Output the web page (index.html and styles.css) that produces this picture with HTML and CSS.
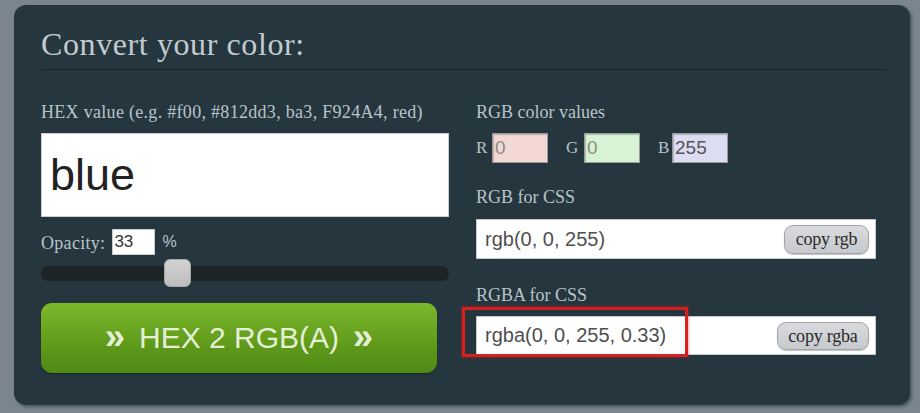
FILE: index.html
```html
<!DOCTYPE html>
<html>
<head>
<meta charset="utf-8">
<link rel="stylesheet" href="styles.css">
</head>
<body>
<div class="panel">
  <h1 class="title">Convert your color:</h1>
  <div class="columns">
    <div class="col-left">
      <div class="label label-hex">HEX value (e.g. #f00, #812dd3, ba3, F924A4, red)</div>
      <div class="hex-input">blue</div>
      <div class="opacity-row">
        <span class="label-inline">Opacity:</span>
        <span class="opacity-input">33</span>
        <span class="pct">%</span>
      </div>
      <div class="slider">
        <div class="track"></div>
        <div class="thumb" style="left: 123px"></div>
      </div>
      <div class="convert-btn"><span class="chev chev-l">»</span>HEX 2 RGB(A)<span class="chev chev-r">»</span></div>
    </div>
    <div class="col-right">
      <div class="label">RGB color values</div>
      <div class="rgb-row">
        <span class="ch">R</span><span class="chan chan-r">0</span>
        <span class="ch ch-g">G</span><span class="chan chan-g">0</span>
        <span class="ch ch-b">B</span><span class="chan chan-b">255</span>
      </div>
      <div class="label label-css">RGB for CSS</div>
      <div class="css-row">
        <span class="css-text">rgb(0, 0, 255)</span>
        <span class="copy-btn">copy rgb</span>
      </div>
      <div class="label label-rgba">RGBA for CSS</div>
      <div class="highlight-wrap">
        <div class="css-row css-row-rgba">
          <span class="css-text">rgba(0, 0, 255, 0.33)</span>
          <span class="copy-btn copy-rgba">copy rgba</span>
        </div>
        <div class="highlight"></div>
      </div>
    </div>
  </div>
</div>
</body>
</html>
```
FILE: styles.css
```css
html, body {
  margin: 0;
  padding: 0;
}
body {
  background: #7a858f;
  width: 920px;
  height: 413px;
  overflow: hidden;
  font-family: "Liberation Serif", serif;
}
.panel {
  margin: 5px 0 0 14px;
  width: 896px;
  height: 400px;
  box-sizing: border-box;
  background: #25363f;
  border-radius: 12px;
  box-shadow: 2px 2px 3px rgba(20, 30, 35, 0.45);
  padding: 19px 23px 0 27px;
}
.title {
  margin: 0;
  font-weight: normal;
  font-size: 32px;
  line-height: 40px;
  letter-spacing: 0.6px;
  color: #c3cbcf;
  padding-bottom: 5px;
  border-bottom: 1px solid #17242a;
}
.columns {
  display: flex;
  gap: 27px;
}
.col-left {
  width: 408px;
  display: flex;
  flex-direction: column;
}
.col-right {
  width: 400px;
  display: flex;
  flex-direction: column;
}
.label {
  margin-top: 31px;
  font-size: 18px;
  line-height: 22px;
  color: #b9c4c8;
  white-space: nowrap;
}
.label-hex {
  letter-spacing: 0.3px;
}
.hex-input {
  margin-top: 10px;
  height: 84px;
  box-sizing: border-box;
  background: #fff;
  border: 1px solid #c9cdd0;
  font-family: "Liberation Sans", Arial, sans-serif;
  font-size: 45px;
  line-height: 82px;
  padding-left: 8px;
  color: #222;
}
.opacity-row {
  margin-top: 12px;
  height: 26px;
  display: flex;
  align-items: center;
}
.label-inline {
  font-size: 18px;
  color: #b9c4c8;
  margin-top: 2px;
  letter-spacing: 0.3px;
}
.opacity-input {
  margin-left: 7px;
  width: 43px;
  height: 26px;
  box-sizing: border-box;
  background: #fff;
  border: 1px solid #c9cdd0;
  font-family: "Liberation Sans", Arial, sans-serif;
  font-size: 17px;
  line-height: 24px;
  padding-left: 1px;
  color: #333;
}
.pct {
  margin-left: 7px;
  font-family: "Liberation Sans", Arial, sans-serif;
  font-size: 16px;
  color: #b9c4c8;
}
.slider {
  margin-top: 4px;
  height: 28px;
  position: relative;
  display: flex;
  align-items: center;
}
.track {
  width: 100%;
  height: 15px;
  background: #1d2426;
  border-radius: 7px;
}
.thumb {
  position: absolute;
  top: 0;
  width: 27px;
  height: 28px;
  box-sizing: border-box;
  border-radius: 6px;
  background: linear-gradient(#d2d2d2, #bdbdbd);
  border: 1px solid #a8a8a8;
}
.convert-btn {
  margin-top: 16px;
  width: 396px;
  height: 70px;
  border-radius: 11px;
  background: linear-gradient(#7cb82b, #5f9a1b 60%, #4f8914);
  color: #e4efd6;
  font-family: "Liberation Sans", Arial, sans-serif;
  font-size: 30px;
  line-height: 70px;
  display: flex;
  justify-content: center;
  align-items: center;
  box-shadow: 0 1px 1px rgba(0, 0, 0, 0.3);
}
.chev {
  font-weight: bold;
  font-size: 36px;
  margin-top: -3px;
}
.chev-l {
  margin-right: 14px;
}
.chev-r {
  margin-left: 14px;
}
.rgb-row {
  margin-top: 10px;
  height: 30px;
  display: flex;
  align-items: center;
}
.ch {
  font-size: 17px;
  color: #b9c4c8;
  width: 16px;
}
.ch-g {
  margin-left: 18px;
  width: 18px;
}
.ch-b {
  margin-left: 18px;
  width: 14px;
}
.chan {
  width: 56px;
  height: 30px;
  box-sizing: border-box;
  border: 1px solid #9a9c9a;
  box-shadow: inset 1px 1px 1px rgba(0, 0, 0, 0.2);
  font-family: "Liberation Sans", Arial, sans-serif;
  font-size: 19px;
  line-height: 28px;
  padding-left: 2px;
  color: #8c8c84;
}
.chan-r { background: #f3d8d6; }
.chan-g { background: #d8f2d6; }
.chan-b { background: #dcdcf3; color: #555; }
.label-css {
  margin-top: 23px;
}
.label-rgba {
  margin-top: 25px;
}
.css-row {
  margin-top: 11px;
  height: 40px;
  box-sizing: border-box;
  background: #fff;
  border: 1px solid #c4c8cb;
  display: flex;
  align-items: center;
  justify-content: space-between;
  padding: 0 6px 0 8px;
}
.css-row-rgba {
  margin-top: 0;
  height: 39px;
}
.highlight-wrap {
  margin-top: 10px;
  position: relative;
}
.css-text {
  font-family: "Liberation Sans", Arial, sans-serif;
  font-size: 20px;
  color: #4f4f4f;
}
.copy-btn {
  width: 85px;
  height: 29px;
  box-sizing: border-box;
  border: 1px solid #a2a4a6;
  border-radius: 9px;
  background: linear-gradient(#d9dbde, #c6c9cd);
  box-shadow: 0 1px 1px rgba(0, 0, 0, 0.25);
  font-size: 18px;
  line-height: 27px;
  text-align: center;
  color: #2a2a2a;
  letter-spacing: -0.2px;
}
.copy-rgba {
  width: 92px;
  height: 28px;
  line-height: 26px;
}
.highlight {
  position: absolute;
  left: -14px;
  top: -9px;
  width: 226px;
  height: 50px;
  box-sizing: border-box;
  border: 3px solid #d91e1e;
  box-shadow: 0 0 3px rgba(220, 30, 30, 0.7);
}
```
